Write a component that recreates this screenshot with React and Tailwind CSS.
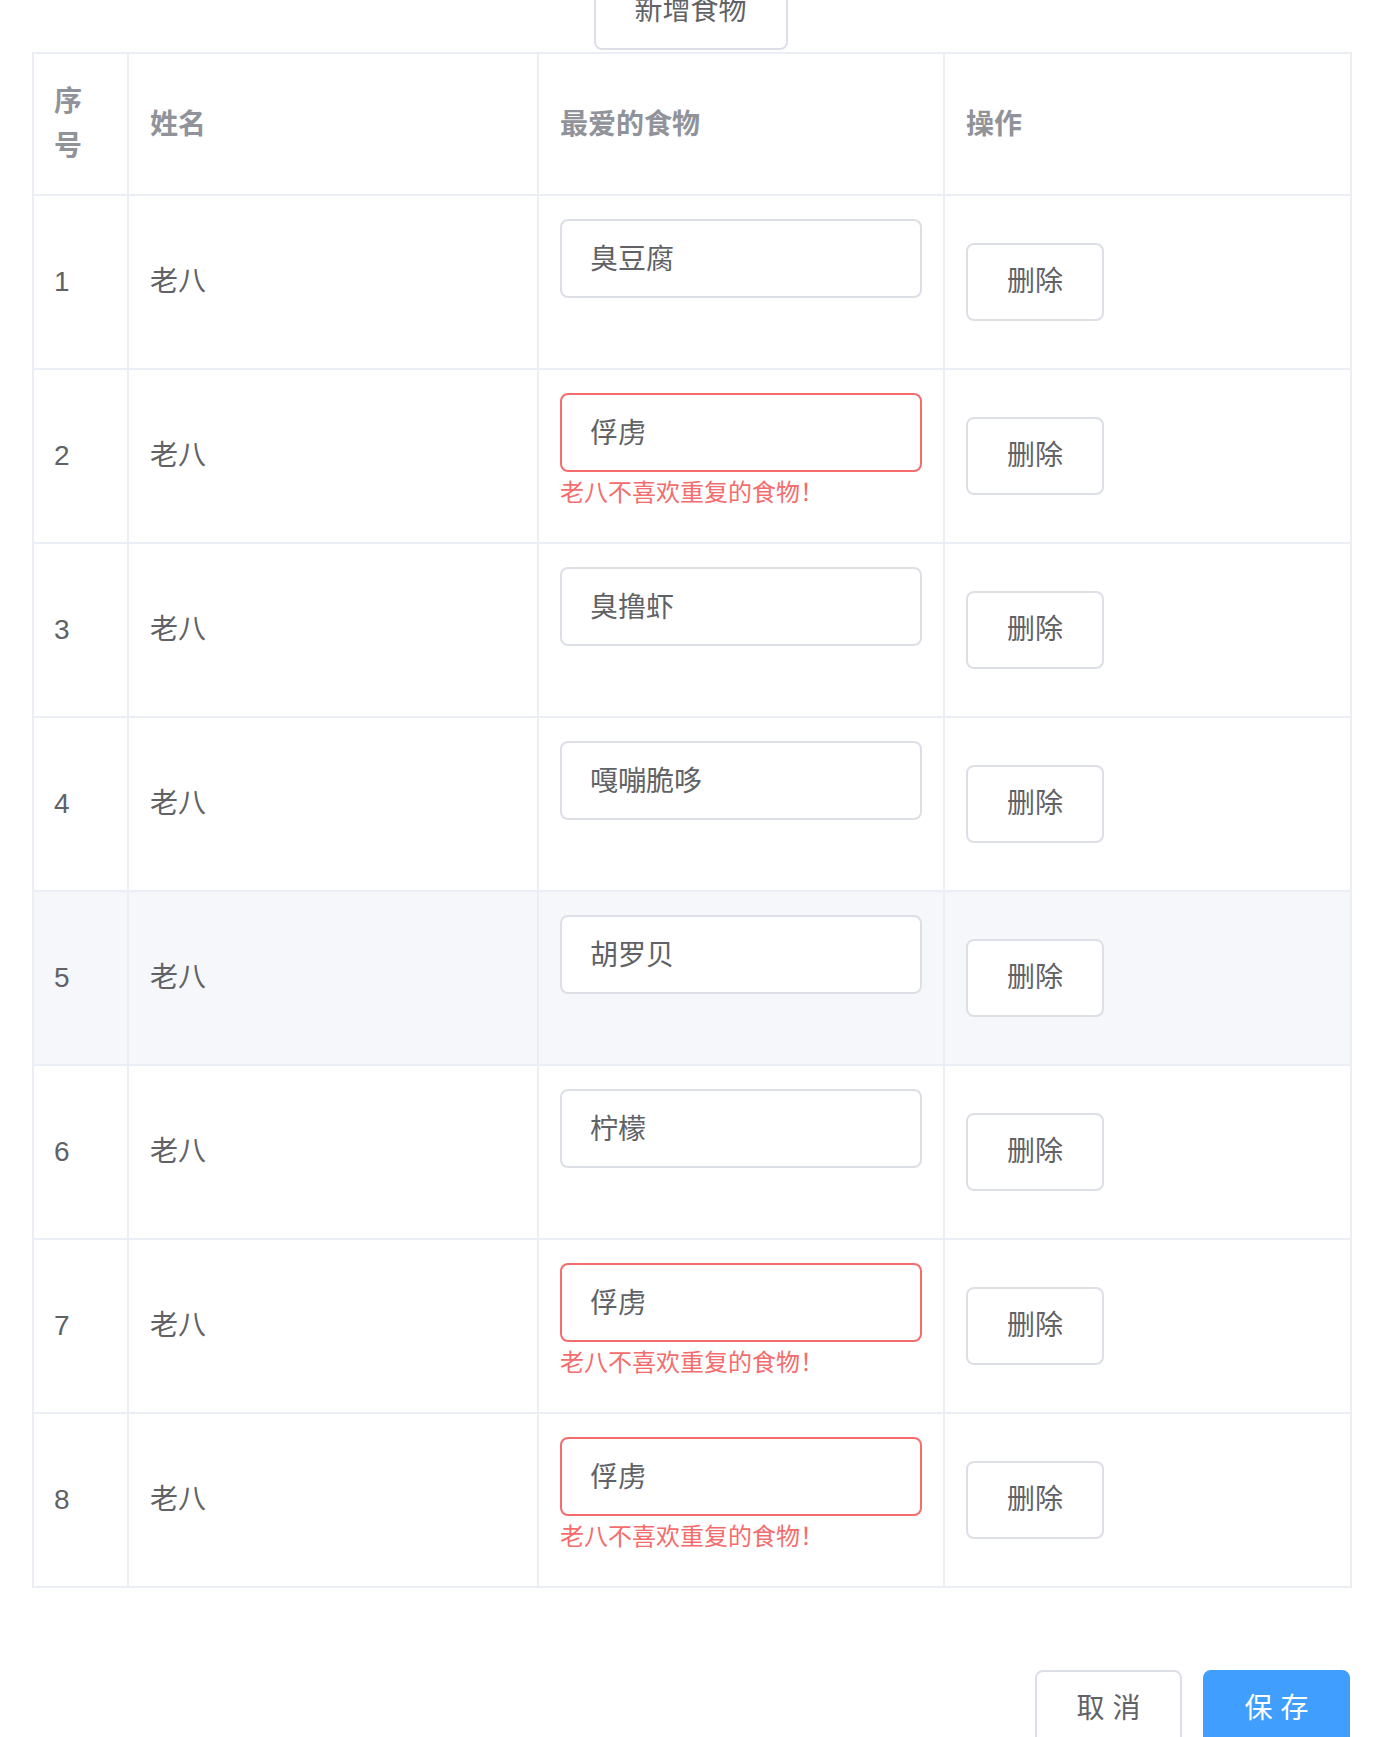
import React from 'react'

const rows = [
  { id: 1, name: '老八', food: '臭豆腐', error: false },
  { id: 2, name: '老八', food: '俘虏', error: true },
  { id: 3, name: '老八', food: '臭撸虾', error: false },
  { id: 4, name: '老八', food: '嘎嘣脆哆', error: false },
  { id: 5, name: '老八', food: '胡罗贝', error: false, hover: true },
  { id: 6, name: '老八', food: '柠檬', error: false },
  { id: 7, name: '老八', food: '俘虏', error: true },
  { id: 8, name: '老八', food: '俘虏', error: true },
]

export default function App() {
  return (
    <div
      className="h-[1737px] overflow-hidden bg-white text-[#606266]"
      style={{ fontFamily: '"Liberation Sans", "Noto Sans CJK SC", sans-serif' }}
    >
      {/* 新增按钮 */}
      <div className="flex w-[1318px] ml-[32px] justify-center -mt-[28px] mb-[2px]">
        <button className="w-[194px] h-[78px] rounded-[8px] border-2 border-[#DCDFE6] bg-white text-[28px] text-[#606266] ml-[-1px]">
          新增食物
        </button>
      </div>

      {/* 表格 */}
      <table className="ml-[32px] w-[1318px] table-fixed border-collapse border-2 border-[#EBEEF5]">
        <colgroup>
          <col className="w-[95px]" />
          <col className="w-[410px]" />
          <col className="w-[406px]" />
          <col className="w-[407px]" />
        </colgroup>
        <thead>
          <tr className="h-[142px]">
            <th className="border-2 border-[#EBEEF5] px-[20px] text-left align-middle text-[28px] leading-[45px] font-bold text-[#909399]">
              序<br />号
            </th>
            <th className="border-2 border-[#EBEEF5] px-[21px] text-left align-middle text-[28px] leading-[45px] font-bold text-[#909399]">
              姓名
            </th>
            <th className="border-2 border-[#EBEEF5] px-[21px] text-left align-middle text-[28px] leading-[45px] font-bold text-[#909399]">
              最爱的食物
            </th>
            <th className="border-2 border-[#EBEEF5] px-[21px] text-left align-middle text-[28px] leading-[45px] font-bold text-[#909399]">
              操作
            </th>
          </tr>
        </thead>
        <tbody>
          {rows.map(row => (
            <tr key={row.id} className={`h-[174px] ${row.hover ? 'bg-[#F5F7FA]' : 'bg-white'}`}>
              <td className="border-2 border-[#EBEEF5] px-[20px] align-middle text-[28px]">
                {row.id}
              </td>
              <td className="border-2 border-[#EBEEF5] px-[21px] align-middle text-[28px]">
                {row.name}
              </td>
              <td className="border-2 border-[#EBEEF5] px-[21px] pt-[23px] align-top">
                <div
                  className={`flex items-center h-[79px] w-[362px] px-[28px] pt-[2px] rounded-[8px] border-2 bg-white text-[28px] text-[#606266]
                    ${row.error ? 'border-[#F56C6C]' : 'border-[#DCDFE6]'}`}
                >
                  {row.food}
                </div>
                {row.error && (
                  <div className="mt-[9px] text-[24px] leading-[24px] text-[#F56C6C]">
                    老八不喜欢重复的食物！
                  </div>
                )}
              </td>
              <td className="border-2 border-[#EBEEF5] px-[21px] align-middle">
                <button className="w-[138px] h-[78px] rounded-[8px] border-2 border-[#DCDFE6] bg-white text-[28px] text-[#606266]">
                  删除
                </button>
              </td>
            </tr>
          ))}
        </tbody>
      </table>

      {/* 底部按钮 */}
      <div className="flex justify-end gap-[21px] w-[1318px] ml-[32px] mt-[82px]">
        <button className="w-[147px] h-[78px] rounded-[8px] border-2 border-[#DCDFE6] bg-white text-[28px] text-[#606266]">
          取 消
        </button>
        <button className="w-[147px] h-[78px] rounded-[8px] border-2 border-[#409EFF] bg-[#409EFF] text-[28px] text-white">
          保 存
        </button>
      </div>
    </div>
  )
}
